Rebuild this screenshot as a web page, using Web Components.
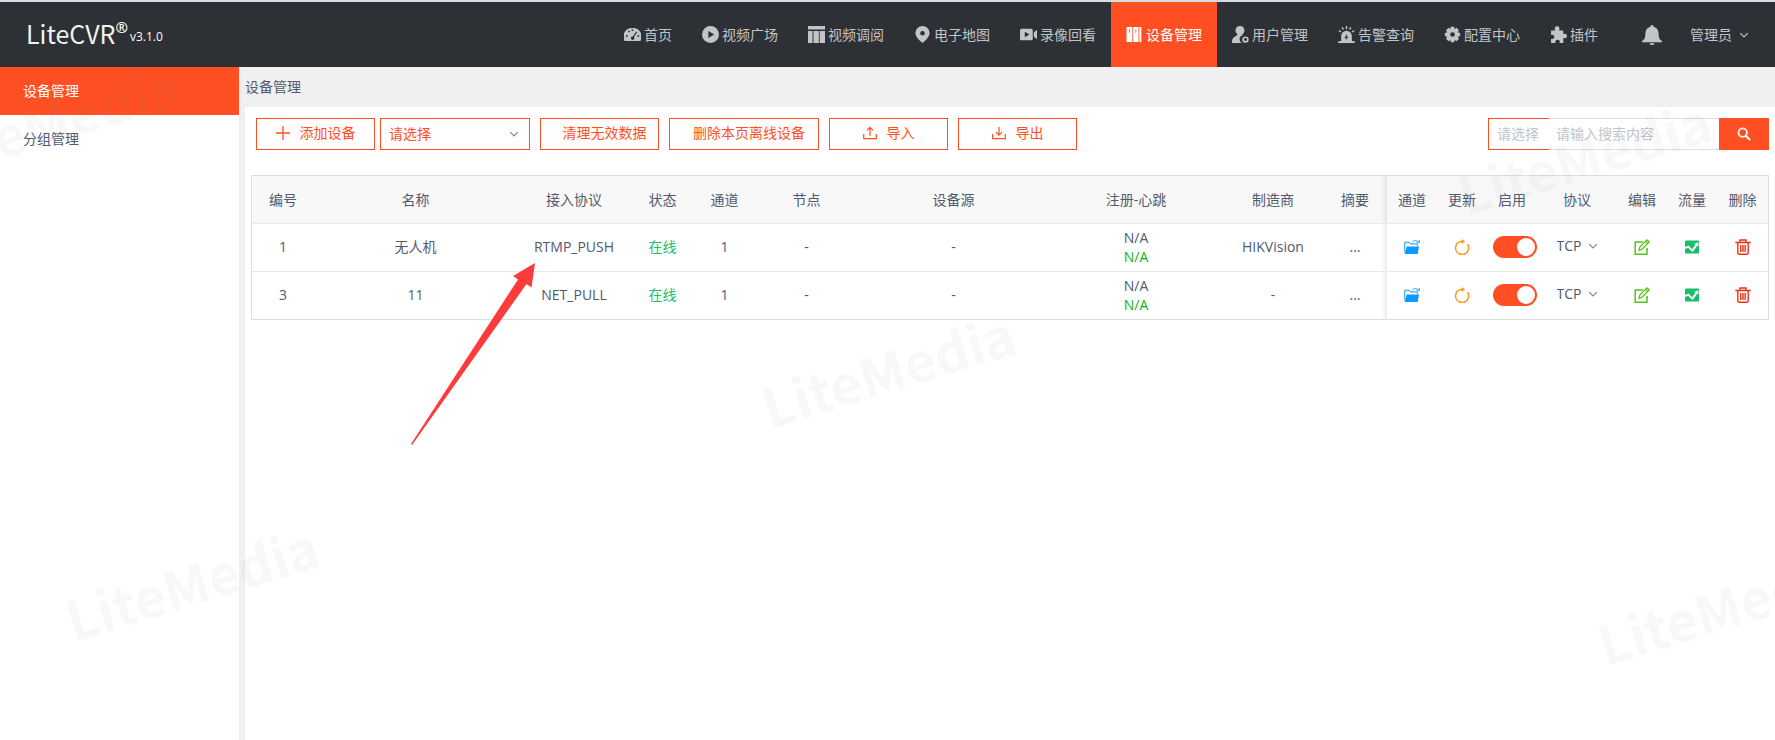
<!DOCTYPE html>
<html lang="zh-CN">
<head>
<meta charset="utf-8">
<meta name="viewport" content="width=device-width, initial-scale=1">
<title>LiteCVR 设备管理</title>
<style>
  :root {
    --brand: #ff4f23;
    --text: #515a6e;
    --line: #dcdee2;
    --line-soft: #e8eaec;
    --green: #19be6b;
    --page: #f0f0f0;
  }
  html, body { margin: 0; }
  body {
    font: 14px/20px "Open Sans", "Noto Sans CJK SC", sans-serif;
    color: var(--text);
    background: var(--page);
  }
</style>
</head>
<body>
<cvr-app></cvr-app>

<script>
const ICONS = {
  dashboard: '<path fill="currentColor" fill-rule="evenodd" d="M8 2a8 8 0 0 0-7.500 12h15A8 8 0 0 0 8 2zM7.200 3.200h1.600v1.500H7.200zM3.700 5l1.200-.8.8 1.200-1.200.8zM1.800 8.800h1.700v1.400H1.800zM12.600 8.800h1.700v1.400h-1.700zM11.500 5.200l.8.600-2.900 4.600a1.600 1.600 0 1 1-1.100-.6z"/>',
  play: '<path fill="currentColor" fill-rule="evenodd" d="M8 0a8 8 0 1 0 0 16A8 8 0 0 0 8 0zM6 4.600 11.500 8 6 11.400z"/>',
  layout: '<path fill="currentColor" d="M0 0h16v3.200H0zM0 4.600h4.300V16H0zM5.200 4.600h5V16h-5zM11 4.600h5V16h-5z"/>',
  pin: '<path fill="currentColor" fill-rule="evenodd" d="M8 0a6.700 6.700 0 0 0-6.700 6.700C1.300 11 8 16 8 16s6.700-5 6.700-9.300A6.700 6.700 0 0 0 8 0zm0 4.600a2.200 2.200 0 1 1 0 4.400 2.200 2.200 0 0 1 0-4.400z"/>',
  video: '<path fill="currentColor" fill-rule="evenodd" d="M1.500 2.500h9A1.500 1.500 0 0 1 12 4v8a1.500 1.500 0 0 1-1.500 1.500h-9A1.500 1.500 0 0 1 0 12V4a1.500 1.500 0 0 1 1.500-1.500zM4.500 5.400v5.200L8.800 8zM13 6.200l3-2.700v9l-3-2.700z"/>',
  books: '<path fill="currentColor" fill-rule="evenodd" d="M.5 1H6v14H.5zM6.800 1h5v14h-5zM12.600 1h1.800v14h-1.800zM2.800 3.200v3.200h.8V3.200zM8.900 3.200v3.200h.8V3.200z"/>',
  user: '<path fill="currentColor" d="M7.500 0a4.200 4.200 0 0 1 2.300 7.700l.3 1A3.800 3.800 0 0 0 9.600 16H0c0-4 1.200-5.600 4.700-7L5 7.600A4.200 4.200 0 0 1 7.500 0z"/><circle cx="12.700" cy="12.800" r="2.200" fill="none" stroke="currentColor" stroke-width="1.600"/>',
  alarm: '<path fill="currentColor" fill-rule="evenodd" d="M3 14V9.500a5 5 0 0 1 10 0V14h1.500v.5H16V16H0v-1.500h1.500V14zM8.600 7.600 5.800 11h1.800l-.5 2.400L10 10H8.100z"/><path stroke="currentColor" stroke-width="1.300" d="M8 0v3M4 1.200l1 2.200M12 1.200l-1 2.200M.8 4.200l2 1.500M15.200 4.200l-2 1.500"/>',
  gear: '<path fill="currentColor" fill-rule="evenodd" d="M6.500.8h3l.5 2 1.800-1.100 2.300 2.300L13 5.900l2.200.6v3l-2.200.6 1.100 1.900-2.300 2.300L10 13.200l-.5 2h-3l-.5-2-1.800 1.100L1.900 12 3 10.100.8 9.500v-3L3 5.900 1.900 4l2.300-2.300L6 2.800zM8 5.800a2.200 2.200 0 1 0 0 4.400 2.200 2.200 0 0 0 0-4.400z"/>',
  puzzle: '<path fill="currentColor" d="M1 4.200h4C3.700 2 5 .2 6.700.2S9.700 2 8.500 4.200h4v3.600c2-1.200 3.500 0 3.500 1.600s-1.500 2.900-3.500 1.700V16H9c.7-2.200-.4-3-1.800-3s-2.600.8-2 3H1v-4c2 .8 3-.4 3-1.800S3 7.600 1 8.400z"/>',
  bell: '<path fill="currentColor" d="M8 0a1.300 1.300 0 0 1 1.300 1.300C12 2 13.300 4 13.300 6.800c0 3.500.7 4.700 2.700 6.200v.8H0V13c2-1.500 2.700-2.700 2.700-6.200C2.700 4 4 2 6.700 1.300A1.300 1.300 0 0 1 8 0zM6.200 14.600h3.600a1.800 1.500 0 0 1-3.600 0z"/>',
  chevron: '<path fill="none" stroke="currentColor" stroke-width="2" d="M2 5l6 6 6-6"/>',
  plus: '<path stroke="currentColor" stroke-width="1.500" d="M8 0v16M0 8h16"/>',
  upload: '<path fill="none" stroke="currentColor" stroke-width="1.400" d="M.8 9v5.300h14.400V9M8 11V2M4.500 5 8 1.500 11.500 5"/>',
  download: '<path fill="none" stroke="currentColor" stroke-width="1.400" d="M.8 9v5.300h14.400V9M8 1v9M4.500 7 8 10.500 11.500 7"/>',
  search: '<circle cx="6.500" cy="6.500" r="4.800" fill="none" stroke="currentColor" stroke-width="2"/><path stroke="currentColor" stroke-width="2.400" d="m10 10 5 5"/>',
  folder: '<path fill="none" stroke="currentColor" d="M.8 13V3.200h4.500l1 1.700h7V7"/><path fill="currentColor" d="M2.800 7.400H15L13.600 15H.5z"/><path fill="none" stroke="currentColor" stroke-width=".9" d="M8.500 2.700c2-1.700 4.300-1.300 6.300.5M15.300 1v2.600h-2.600"/>',
  refresh: '<path fill="none" stroke="currentColor" stroke-width="1.500" d="M13.600 5.200A6.600 6.600 0 1 1 8 2.300"/><path fill="currentColor" d="M7.500 0 11 2.600 7.500 5.200z"/>',
  edit: '<path fill="none" stroke="currentColor" stroke-width="1.500" d="M9 3H1.200v12.200H13V9"/><path fill="none" stroke="currentColor" stroke-width="1.300" d="M5 11.200 5.800 8 13 .9 15.200 3 8 10.300zM11.500 2.500l2 2"/>',
  flow: '<path fill="currentColor" fill-rule="evenodd" d="M2 1.500h12a1 1 0 0 1 1 1v11a1 1 0 0 1-1 1H2a1 1 0 0 1-1-1v-11a1 1 0 0 1 1-1zM1 8.200l3.400-1.600 3.800 3.700 3.200-4.500-1-.8 3.800-1.700.3 4-1-.7-5 6.300-4.300-4.200L1 9.900z"/>',
  trash: '<path fill="none" stroke="currentColor" stroke-width="1.400" d="M.3 3.500h15.400M5 3.300V1h6v2.300M2.800 3.500v10.300a1.500 1.500 0 0 0 1.500 1.500h7.400a1.500 1.500 0 0 0 1.500-1.500V3.500M5.800 6v7M8 6v7M10.200 6v7"/>'
};

/* Registers an element; setup fills a fresh copy of its markup before it is shown. */
const define = (name, html, setup) => {
  const template = document.createElement('template');
  template.innerHTML = html;
  customElements.define(name, class extends HTMLElement {
    connectedCallback() {
      if (this.shadowRoot) return;
      const content = template.content.cloneNode(true);
      if (setup) setup(this, content);
      this.attachShadow({ mode: 'open' }).append(content);
    }
  });
};

/* One glyph from the icon set; its size is the --size property. */
define('cvr-icon', `
  <style>
    :host { display: inline-flex; flex: none; width: var(--size, 16px); height: var(--size, 16px); }
    svg { width: 100%; height: 100%; display: block; }
  </style>
  <svg viewBox="0 0 16 16" aria-hidden="true"></svg>
`, (host, root) => {
  root.querySelector('svg').innerHTML = ICONS[host.getAttribute('name')];
});

define('cvr-nav-item', `
  <style>
    :host { display: block; }
    a {
      display: flex; align-items: center; gap: 3px; height: 100%; padding: 0 15px; box-sizing: border-box;
      color: inherit; text-decoration: none; white-space: nowrap;
    }
    cvr-icon { --size: 17px; }
    :host([active]) a { background: var(--brand); color: #fff; }
  </style>
  <a href="#"><cvr-icon></cvr-icon><slot></slot></a>
`, (host, root) => {
  root.querySelector('cvr-icon').setAttribute('name', host.getAttribute('icon'));
  if (host.hasAttribute('active')) root.querySelector('a').setAttribute('aria-current', 'page');
});

define('cvr-header', `
  <style>
    :host {
      display: flex; justify-content: space-between; height: 65px;
      border-top: 2px solid #d6dce4; background: #2d3035; color: #c3c4c6;
    }
    .brand { display: flex; align-items: flex-start; padding: 15px 0 0 26px; color: #fff; }
    .name { font: 400 25px/32px "Noto Sans CJK SC", "Noto Sans", sans-serif; color: #f2f2f2; }
    .mark { font-size: 15px; font-weight: 600; line-height: 20px; }
    .version { font-size: 12px; line-height: 20px; padding: 10px 0 0 2px; }
    nav { display: flex; }
    .tools { display: flex; align-items: center; padding: 0 26px 0 29px; gap: 28px; }
    button { display: flex; align-items: center; gap: 7px; border: 0; padding: 0; background: none; color: inherit; font: inherit; }
    .bell { --size: 20px; }
    .more { --size: 10px; }
  </style>
  <div class="brand"><span class="name">LiteCVR</span><span class="mark">®</span><span class="version">v3.1.0</span></div>
  <nav aria-label="主导航">
    <cvr-nav-item icon="dashboard">首页</cvr-nav-item>
    <cvr-nav-item icon="play">视频广场</cvr-nav-item>
    <cvr-nav-item icon="layout">视频调阅</cvr-nav-item>
    <cvr-nav-item icon="pin">电子地图</cvr-nav-item>
    <cvr-nav-item icon="video">录像回看</cvr-nav-item>
    <cvr-nav-item icon="books" active>设备管理</cvr-nav-item>
    <cvr-nav-item icon="user">用户管理</cvr-nav-item>
    <cvr-nav-item icon="alarm">告警查询</cvr-nav-item>
    <cvr-nav-item icon="gear">配置中心</cvr-nav-item>
    <cvr-nav-item icon="puzzle">插件</cvr-nav-item>
    <div class="tools">
      <button type="button" aria-label="通知"><cvr-icon class="bell" name="bell"></cvr-icon></button>
      <button type="button">管理员<cvr-icon class="more" name="chevron"></cvr-icon></button>
    </div>
  </nav>
`);

define('cvr-side-item', `
  <style>
    :host { display: block; }
    a { display: block; padding: 14px 23px; color: inherit; text-decoration: none; }
    :host([active]) a { background: var(--brand); color: #fff; }
  </style>
  <a href="#"><slot></slot></a>
`);

define('cvr-button', `
  <style>
    :host { display: block; width: 119px; }
    :host([wide]) { width: 150px; }
    button {
      display: flex; align-items: center; justify-content: center; gap: 10px;
      width: 100%; height: 32px; padding: 0 0 2px; box-sizing: border-box;
      border: 1px solid var(--brand); background: #fff; color: var(--brand); font: inherit; white-space: nowrap;
    }
    .icon { --size: 14px; display: flex; }
  </style>
  <button type="button"><span class="icon"></span><span><slot></slot></span></button>
`, (host, root) => {
  if (!host.hasAttribute('icon')) return;
  const icon = document.createElement('cvr-icon');
  icon.setAttribute('name', host.getAttribute('icon'));
  root.querySelector('.icon').append(icon);
});

/* Drop-down; "value" is the shown option, "label" its accessible name. */
define('cvr-select', `
  <style>
    :host { display: grid; align-items: center; box-sizing: border-box; }
    select {
      grid-area: 1 / 1; appearance: none; width: 100%; height: 100%; border: 0; margin: 0; background: none;
      padding: var(--pad, 0 24px 0 8px); color: inherit; font: inherit;
    }
    cvr-icon {
      grid-area: 1 / 1; justify-self: end; pointer-events: none;
      --size: 10px; margin-right: var(--arrow-gap, 10px); color: #808695;
    }
    :host([plain]) cvr-icon { display: none; }
  </style>
  <select><option></option></select><cvr-icon name="chevron"></cvr-icon>
`, (host, root) => {
  root.querySelector('select').setAttribute('aria-label', host.getAttribute('label'));
  root.querySelector('option').textContent = host.getAttribute('value');
});

define('cvr-search', `
  <style>
    :host { display: flex; height: 32px; width: 281px; }
    cvr-select { width: 61px; border: 1px solid var(--brand); border-right: 0; color: #c0c4cc; --pad: 0 0 0 8px; background: #fff; }
    input {
      flex: 1; min-width: 0; box-sizing: border-box; border: solid var(--line); border-width: 1px 0;
      padding: 0 7px; font: inherit; color: var(--text); background: #fff;
    }
    input::placeholder { color: #c0c4cc; opacity: 1; }
    button { width: 50px; border: 0; background: var(--brand); color: #fff; padding: 0; display: grid; place-items: center; --size: 14px; }
  </style>
  <cvr-select plain label="搜索类型" value="请选择"></cvr-select>
  <input type="text" aria-label="搜索内容" placeholder="请输入搜索内容">
  <button type="button" aria-label="搜索"><cvr-icon name="search"></cvr-icon></button>
`);

define('cvr-switch', `
  <style>
    :host { display: block; }
    input {
      appearance: none; display: block; box-sizing: border-box; margin: 0; padding: 2px;
      width: 44px; height: 22px; border-radius: 11px; background: #c5c8ce;
    }
    input::before { content: ""; display: block; width: 18px; height: 18px; border-radius: 50%; background: #fff; }
    input:checked { background: var(--brand); }
    input:checked::before { margin-left: auto; }
  </style>
  <input type="checkbox" role="switch" aria-label="启用" checked>
`);

define('cvr-table', `
  <style>
    :host { display: block; }
    table {
      width: 100%; table-layout: fixed; border-collapse: separate; border-spacing: 0; box-sizing: border-box;
      border: 1px solid var(--line); background: #fff; text-align: center;
    }
    th, td { height: 48px; box-sizing: border-box; padding: 0; font-weight: 400; border-bottom: 1px solid var(--line-soft); }
    td { padding-bottom: 2px; }
    tr:last-child td { height: 47px; border-bottom: 0; }
    th { background: #f8f8f9; }
    tr > :nth-child(10) { background-image: linear-gradient(to left, #00000014, #00000000); background-size: 6px 100%; background-position: right; background-repeat: no-repeat; }
    .online { color: var(--green); }
    .beat { line-height: 19px; }
    .beat span { display: block; }
    .beat span + span { color: #13b31a; }
    .toggle { padding-left: 6px; }
    button { display: flex; margin: 0 auto; border: 0; padding: 0; background: none; }
    cvr-select { width: 41px; margin: 0 auto; padding-bottom: 2px; --pad: 0; --arrow-gap: 0; }
  </style>
  <table>
    <colgroup></colgroup>
    <thead><tr></tr></thead>
    <tbody></tbody>
  </table>
`, (host, root) => {
  const columns = [
    ['编号', 62], ['名称', 203], ['接入协议', 114], ['状态', 63], ['通道', 61], ['节点', 103], ['设备源', 191],
    ['注册-心跳', 174], ['制造商', 100], ['摘要', 64],
    ['通道', 50], ['更新', 50], ['启用', 50], ['协议', 80], ['编辑', 50], ['流量', 50], ['删除', 51]
  ];
  const rows = [
    ['1', '无人机', 'RTMP_PUSH', 'HIKVision'],
    ['3', '11', 'NET_PULL', '-']
  ];
  const action = (name, label, color) =>
    `<td><button type="button" aria-label="${label}" style="color:${color}"><cvr-icon name="${name}"></cvr-icon></button></td>`;
  root.querySelector('colgroup').innerHTML = columns.map(c => `<col style="width:${c[1]}px">`).join('');
  root.querySelector('thead tr').innerHTML = columns.map(c => `<th scope="col">${c[0]}</th>`).join('');
  root.querySelector('tbody').innerHTML = rows.map(([id, name, protocol, maker]) => `<tr>
    <td>${id}</td><td>${name}</td><td>${protocol}</td><td class="online">在线</td><td>1</td><td>-</td><td>-</td>
    <td class="beat"><span>N/A</span><span>N/A</span></td><td>${maker}</td><td>...</td>
    ${action('folder', '通道', '#0b9bff')}${action('refresh', '更新', '#ff9a1f')}
    <td class="toggle"><cvr-switch></cvr-switch></td>
    <td><cvr-select label="协议" value="TCP"></cvr-select></td>
    ${action('edit', '编辑', '#52c41a')}${action('flow', '流量', '#19be6b')}${action('trash', '删除', '#ed3014')}
  </tr>`).join('');
});

/* Repeating brand watermark laid over the whole page. */
define('cvr-watermark', `
  <style>
    :host { position: absolute; inset: 0; overflow: hidden; pointer-events: none; z-index: 2; color: #8080800f; }
    span {
      position: absolute; left: var(--x); top: var(--y); font: 700 54px/60px "Noto Sans CJK SC", "Noto Sans", sans-serif;
      transform: translate(-50%, -50%) rotate(-17deg);
    }
  </style>
  <span style="--x:52px;--y:120px" aria-hidden="true">LiteMedia</span>
  <span style="--x:192px;--y:582px" aria-hidden="true">LiteMedia</span>
  <span style="--x:888px;--y:369px" aria-hidden="true">LiteMedia</span>
  <span style="--x:1584px;--y:156px" aria-hidden="true">LiteMedia</span>
  <span style="--x:1724px;--y:606px" aria-hidden="true">LiteMedia</span>
`);

/* Red pointer drawn over the table. */
define('cvr-arrow', `
  <style>
    :host { position: absolute; left: 411px; top: 263px; width: 125px; height: 183px; pointer-events: none; z-index: 3; }
    svg { display: block; }
  </style>
  <svg width="125" height="183" viewBox="0 0 125 183" aria-hidden="true">
    <path fill="#fd3b3b" d="M124 0 102 13l5 3.500L0 181l1.200.8L115.500 21l5 3.500z"/>
  </svg>
`);

define('cvr-app', `
  <style>
    :host { display: flex; flex-direction: column; position: relative; min-height: 100vh; }
    .body { display: flex; flex: 1; gap: 6px; }
    aside { width: 239px; flex: none; background: #fff; }
    main { flex: 1; min-width: 0; display: flex; flex-direction: column; }
    h1 { margin: 0; padding: 10px 0; font-size: 14px; line-height: 20px; font-weight: 400; }
    section { flex: 1; background: #fff; padding: 11px 6px; }
    .bar { display: flex; gap: 10px; padding: 0 0 25px 5px; }
    .pair { display: flex; gap: 5px; }
    .pair cvr-select { width: 150px; height: 32px; border: 1px solid var(--brand); color: var(--brand); }
    cvr-search { margin-left: auto; }
  </style>
  <cvr-header></cvr-header>
  <div class="body">
    <aside>
      <cvr-side-item active>设备管理</cvr-side-item>
      <cvr-side-item>分组管理</cvr-side-item>
    </aside>
    <main>
      <h1>设备管理</h1>
      <section>
        <div class="bar">
          <div class="pair">
            <cvr-button icon="plus">添加设备</cvr-button>
            <cvr-select label="设备类型" value="请选择"></cvr-select>
          </div>
          <cvr-button>清理无效数据</cvr-button>
          <cvr-button wide>删除本页离线设备</cvr-button>
          <cvr-button icon="upload">导入</cvr-button>
          <cvr-button icon="download">导出</cvr-button>
          <cvr-search></cvr-search>
        </div>
        <cvr-table></cvr-table>
      </section>
    </main>
  </div>
  <cvr-watermark></cvr-watermark>
  <cvr-arrow></cvr-arrow>
`);
</script>
</body>
</html>
